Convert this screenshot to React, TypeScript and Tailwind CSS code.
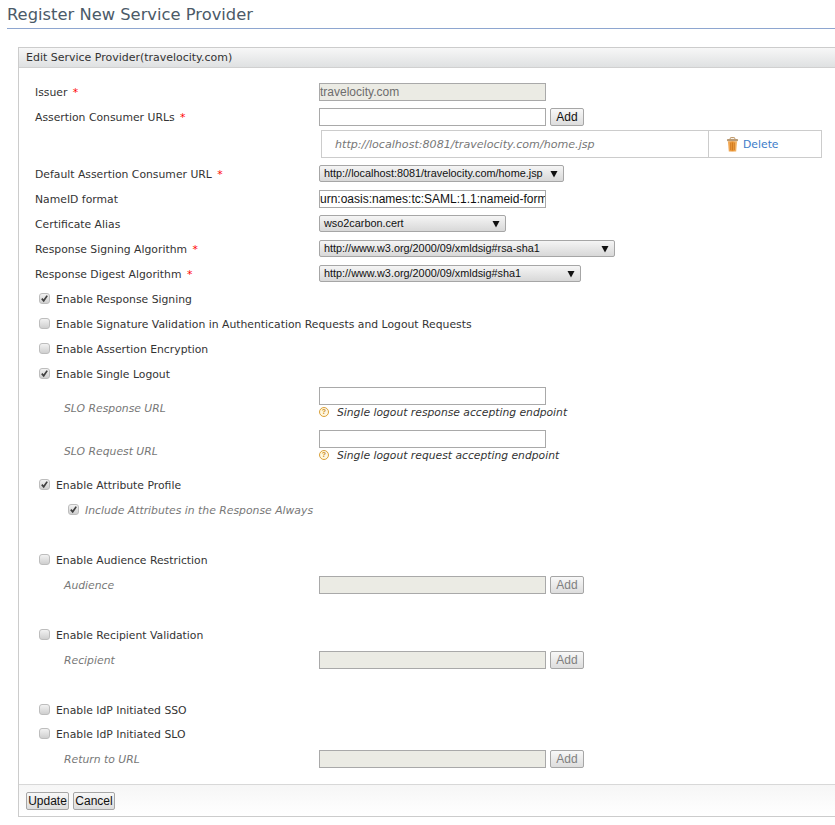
import React from "react";

const Star = () => <span className="ml-[2px] text-[#ff0000]"> *</span>;

function Check({ on }: { on?: boolean }) {
  return (
    <span className="relative flex h-[11px] w-[11px] shrink-0 items-center justify-center rounded-[3px] border border-[#bdbdbd] bg-gradient-to-b from-[#f2f2f2] to-[#cfcfcf]">
      {on && (
        <svg viewBox="0 0 10 10" className="h-[9px] w-[9px]">
          <path d="M2 5.2 L4.1 7.6 L8 1.8" fill="none" stroke="#404040" strokeWidth="1.9" />
        </svg>
      )}
    </span>
  );
}

function CheckRow({ label, on, mt = "" }: { label: string; on?: boolean; mt?: string }) {
  return (
    <div className={`flex h-[25px] items-center pl-[20px] ${mt}`}>
      <Check on={on} />
      <span className="ml-[6px] pt-[3px]">{label}</span>
    </div>
  );
}

function Select({ text, w }: { text: string; w: string }) {
  return (
    <div className={`flex h-[17px] items-center justify-between rounded-[2px] border border-[#a6a6a6] bg-gradient-to-b from-[#f5f5f5] to-[#d8d8d8] pl-[4px] pr-[5px] font-['Liberation_Sans',Arial,sans-serif] text-[10.85px] text-[#111] ${w}`}>
      <span>{text}</span>
      <svg viewBox="0 0 8 8" className="h-[8px] w-[8px]">
        <path d="M0.5 1 H7.5 L4 7.5 Z" fill="#111" />
      </svg>
    </div>
  );
}

function TextBox({ value = "", disabled, dark }: { value?: string; disabled?: boolean; dark?: boolean }) {
  return (
    <input
      readOnly
      value={value}
      className={`h-[18px] w-[227px] border-[1px] px-0 font-['Liberation_Sans',Arial,sans-serif] text-[12px] outline-none ${
        disabled ? "border-[#a9a9a9] bg-[#ebebe4] text-[#6d6d6d]" : dark ? "border-[#a9a9a9] bg-white text-[#111]" : "border-[#a9a9a9] bg-white"
      }`}
    />
  );
}

function AddBtn({ disabled, label = "Add" }: { disabled?: boolean; label?: string }) {
  return (
    <button
      className={`ml-[4px] flex h-[18px] w-[34px] items-center justify-center rounded-[2px] border border-[#a6a6a6] bg-gradient-to-b from-[#f8f8f8] to-[#dddddd] font-['Liberation_Sans',Arial,sans-serif] text-[12px] ${
        disabled ? "text-[#808080]" : "text-[#111]"
      }`}
    >
      {label}
    </button>
  );
}

function Row({ label, star, children, sub }: { label: string; star?: boolean; children?: React.ReactNode; sub?: boolean }) {
  return (
    <div className="flex h-[25px] items-center">
      <div className={`shrink-0 pt-[3px] ${sub ? "mr-[29px] w-[255px] pl-[29px] italic text-[#777]" : "w-[284px]"}`}>
        {label}
        {star && <Star />}
      </div>
      {children}
    </div>
  );
}

function Help({ text }: { text: string }) {
  return (
    <div className="flex h-[16px] items-center">
      <span className="-mt-[3px] flex h-[10px] w-[10px] items-center justify-center rounded-full border-[1.5px] border-[#d9a13b] bg-[#fff7e0] font-['Liberation_Sans',Arial,sans-serif] text-[7px] font-bold leading-none text-[#c98a1c]">
        ?
      </span>
      <span className="ml-[8px] pt-[1px] text-[10.75px] italic text-[#333]">{text}</span>
    </div>
  );
}

function SloRow({ label, help }: { label: string; help: string }) {
  return (
    <div className="flex h-[43px]">
      <div className="mr-[29px] flex h-[43px] w-[255px] shrink-0 items-center pl-[29px] pt-[3px] italic text-[#777]">
        <span className="mt-[1px]">{label}</span>
      </div>
      <div className="flex flex-col pt-[1px]">
        <TextBox />
        <Help text={help} />
      </div>
    </div>
  );
}

function Trash() {
  return (
    <svg viewBox="0 0 14 16" className="h-[15px] w-[13px]">
      <defs>
        <linearGradient id="tr" x1="0" x2="1" y1="0" y2="0">
          <stop offset="0" stopColor="#f4b266" />
          <stop offset="0.5" stopColor="#e8902c" />
          <stop offset="1" stopColor="#f6c07a" />
        </linearGradient>
      </defs>
      <rect x="4.5" y="0.5" width="5" height="2" rx="1" fill="none" stroke="#b98c58" />
      <rect x="1" y="2" width="12" height="2.5" rx="1" fill="#b99a74" />
      <path d="M2 4.5 H12 L11 15.5 H3 Z" fill="url(#tr)" />
      <path d="M5 6 V14 M7 6 V14 M9 6 V14" stroke="#c9741b" strokeWidth="0.8" />
    </svg>
  );
}

function FooterBtn({ label, w }: { label: string; w: string }) {
  return (
    <button className={`flex h-[18px] items-center justify-center rounded-[2px] border border-[#a6a6a6] bg-gradient-to-b from-[#f8f8f8] to-[#dddddd] font-['Liberation_Sans',Arial,sans-serif] text-[12px] text-[#111] ${w}`}>
      {label}
    </button>
  );
}

export default function App() {
  return (
    <div className="h-[825px] w-[835px] overflow-hidden bg-white font-['DejaVu_Sans',Verdana,sans-serif] text-[10.82px] text-[#333]">
      <div className="ml-[7px] flex h-[29px] items-center border-b border-[#8ea6d0] pb-[3px] text-[16.33px] leading-none text-[#4b5a68]">
        <span className="mt-[6px]">Register New Service Provider</span>
      </div>
      <div className="ml-[18px] mt-[18px] h-[770px] w-[830px] border border-[#cccccc]">
        <div className="flex h-[20px] items-center border-b border-[#d0d0d0] bg-gradient-to-b from-[#f7f7f7] to-[#dfe1e2] pl-[7px] pt-[2px] text-[10.98px] text-[#333]">
          Edit Service Provider(travelocity.com)
        </div>
        <div className="h-[716px] pl-[16px] pt-[11px]">
          <Row label="Issuer" star>
            <TextBox value="travelocity.com" disabled />
          </Row>
          <Row label="Assertion Consumer URLs" star>
            <TextBox />
            <AddBtn />
          </Row>
          <div className="ml-[286px] mt-[1px] flex h-[28px] w-[501px] border border-[#cccccc] italic text-[#777]">
            <div className="flex w-[387px] items-center border-r border-[#cccccc] pl-[13px] pt-[2px] text-[11.1px]">
              http://localhost:8081/travelocity.com/home.jsp
            </div>
            <div className="flex flex-1 items-center pl-[17px] not-italic text-[#3b7cc9]">
              <Trash />
              <span className="ml-[4px] mt-[3px]">Delete</span>
            </div>
          </div>
          <div className="mt-[3px]">
            <Row label="Default Assertion Consumer URL" star>
              <Select text="http://localhost:8081/travelocity.com/home.jsp" w="w-[245px]" />
            </Row>
          </div>
          <Row label="NameID format">
            <TextBox value="urn:oasis:names:tc:SAML:1.1:nameid-format:emailAddress" dark />
          </Row>
          <Row label="Certificate Alias">
            <Select text="wso2carbon.cert" w="w-[187px]" />
          </Row>
          <Row label="Response Signing Algorithm" star>
            <Select text="http://www.w3.org/2000/09/xmldsig#rsa-sha1" w="w-[296px]" />
          </Row>
          <Row label="Response Digest Algorithm" star>
            <Select text="http://www.w3.org/2000/09/xmldsig#sha1" w="w-[262px]" />
          </Row>
          <div className="-ml-[16px]">
            <CheckRow label="Enable Response Signing" on />
            <CheckRow label="Enable Signature Validation in Authentication Requests and Logout Requests" />
            <CheckRow label="Enable Assertion Encryption" />
            <CheckRow label="Enable Single Logout" on />
          </div>
          <SloRow label="SLO Response URL" help="Single logout response accepting endpoint" />
          <SloRow label="SLO Request URL" help="Single logout request accepting endpoint" />
          <div className="-ml-[16px]">
            <CheckRow label="Enable Attribute Profile" on />
            <div className="flex h-[25px] items-center pl-[49px]">
              <Check on />
              <span className="ml-[6px] pt-[3px] italic text-[#777]">Include Attributes in the Response Always</span>
            </div>
            <CheckRow label="Enable Audience Restriction" mt="mt-[25px]" />
          </div>
          <Row label="Audience" sub>
            <TextBox disabled />
            <AddBtn disabled />
          </Row>
          <div className="-ml-[16px]">
            <CheckRow label="Enable Recipient Validation" mt="mt-[25px]" />
          </div>
          <Row label="Recipient" sub>
            <TextBox disabled />
            <AddBtn disabled />
          </Row>
          <div className="-ml-[16px]">
            <CheckRow label="Enable IdP Initiated SSO" mt="mt-[25px]" />
            <CheckRow label="Enable IdP Initiated SLO" mt="-mt-[1px]" />
          </div>
          <Row label="Return to URL" sub>
            <TextBox disabled />
            <AddBtn disabled />
          </Row>
        </div>
        <div className="flex h-[32px] items-start gap-[4px] border-t border-[#d8d8d8] bg-gradient-to-b from-[#f6f6f6] to-white pl-[7px] pt-[7px]">
          <FooterBtn label="Update" w="w-[43px]" />
          <FooterBtn label="Cancel" w="w-[42px]" />
        </div>
      </div>
    </div>
  );
}
